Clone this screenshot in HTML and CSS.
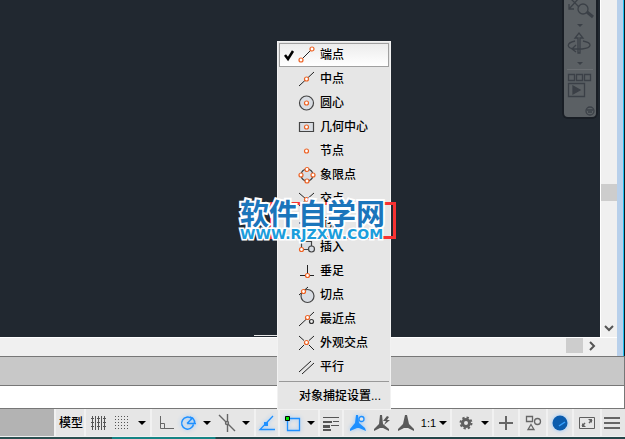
FILE: index.html
```html
<!DOCTYPE html>
<html lang="zh-CN">
<head>
<meta charset="utf-8">
<title>对象捕捉</title>
<link rel="stylesheet" href="styles.css">
</head>
<body>
<div class="workspace">
  <div class="view">
    <main class="canvas">
      <div class="navbar">
        <svg width="32" height="118" viewBox="0 0 32 118" fill="none" stroke="#3b4047" stroke-width="1.3">
          <path d="M7 -1l8 8M16 -3L5 9M5 4v5h5"/><circle cx="19" cy="9" r="5"/><path d="M23 12l6 5" stroke-width="3"/>
          <path d="M13 24h6l-3 3z" fill="#3b4047" stroke="none"/>
          <path d="M14 53V38h-3l4-5 4 5h-3v15z"/><path d="M11 41c-9 2-9 7 0 8M19 41c10 2 9 7-1 8h-9M12 45l-4 4 4 3"/>
          <path d="M13 62h6l-3 3z" fill="#3b4047" stroke="none"/>
          <path d="M3 69.500h26" stroke="#6b6f73" stroke-width="1"/>
          <path d="M4.500 74.500h6v6h-6zM12.500 74.500h6v6h-6zM20.500 74.500h6v6h-6zM4.500 83.500h16v13h-16z"/>
          <path d="M9 86l7 4-7 4z" fill="#3b4047"/>
          <circle cx="26" cy="111" r="4"/><path d="M23 110h6M24 112h4"/>
        </svg>
      </div>
      <span class="tab-edge"></span>
    </main>
    <div class="vscroll">
      <span class="vthumb"></span>
      <svg class="chevron" width="16" height="18" viewBox="0 0 16 18"><path d="M4 7l4 4 4-4"/></svg>
    </div>
    <div class="hscroll">
      <span class="hthumb"></span>
      <svg class="chevron" width="18" height="17" viewBox="0 0 18 17"><path d="M7 4l4 4-4 4"/></svg>
    </div>
  </div>
  <div class="window-edge"></div>
</div>
<div class="history"></div>
<input class="command" type="text" aria-label="命令行">
<footer class="status">
  <div class="group model"><button>模型</button></div>
  <div class="group">
    <button class="tool" aria-label="栅格"><svg width="16" height="16" viewBox="0 0 16 16" stroke="#555"><path d="M2.500 1v14M5.500 1v14M8.500 1v14M11.500 1v14M14.500 1v14"/><path d="M1 3.500h15M1 7.500h15M1 11.500h15" stroke-dasharray="1 1"/></svg></button>
    <button class="tool" aria-label="捕捉"><svg width="16" height="16" viewBox="0 0 16 16" stroke="#555" stroke-dasharray="1 2"><path d="M1 1.500h15M1 4.500h15M1 7.500h15M1 10.500h15M1 13.500h15"/></svg></button>
    <button class="drop" aria-label="捕捉选项"></button>
  </div>
  <div class="group lead">
    <button class="tool" aria-label="正交"><svg width="16" height="16" viewBox="0 0 16 16" fill="none" stroke="#666"><path d="M2.500 1v12.500H16M2.500 8.500h4v5"/></svg></button>
    <button class="tool polar" aria-label="极轴"><svg class="lit" width="18" height="18" viewBox="0 0 18 18" fill="none" stroke="#1e90ff" stroke-width="1.500"><path d="M12.500 4.500a6 6 0 1 0 2 6M8 9.500h9M8 9.500l6-6M11 3l3 1.500q2 2 1.500 5"/></svg></button>
    <button class="drop wide" aria-label="极轴选项"></button>
    <button class="tool slim" aria-label="等轴测"><svg width="18" height="18" viewBox="0 0 18 18" fill="none" stroke="#666" stroke-width="1.400"><path d="M1 1l16 16M9.500 0v18"/><circle cx="9" cy="9" r="1.500" fill="#e6e6e6"/></svg></button>
    <button class="drop" aria-label="等轴测选项"></button>
  </div>
  <div class="group">
    <button class="tool slim" aria-label="对象捕捉追踪"><svg class="lit" width="18" height="18" viewBox="0 0 18 18" fill="none" stroke="#1e90ff" stroke-width="1.300"><path d="M15 2L2 15.500h15"/><path d="M6 8h4v4H6z" fill="#1e90ff" stroke="none"/></svg></button>
  </div>
  <div class="group">
    <button class="tool" aria-label="对象捕捉"><svg class="lit" width="18" height="18" viewBox="0 0 18 18" fill="none"><path d="M4.500 4.500h12v12h-12z" stroke="#1e90ff" stroke-width="1.300"/><path d="M2.500 2.500h4v4h-4z" fill="#00e600" stroke="#000"/></svg></button>
    <button class="drop narrow" aria-label="对象捕捉选项"></button>
  </div>
  <div class="group">
    <button class="tool slim" aria-label="线宽"><svg width="18" height="18" viewBox="0 0 18 18" fill="#555"><path d="M1 3h16v1H1zM1 7h9v2H1zM11 7h6v1h-6zM1 11h7v3H1zM9 11h8v1H9zM1 15h8v2H1z"/></svg></button>
  </div>
  <div class="group lead">
    <button class="tool" aria-label="注释可见性"><svg class="lit" width="18" height="18" viewBox="0 0 18 18" fill="#1e90ff"><path d="M7 1l2 0 1 8 6 5 1 3-7-3H8l-7 3v-2l5-6z"/><circle cx="12.500" cy="5" r="2.500" fill="#e6e6e6" stroke="#1e90ff" stroke-width="1.300"/></svg></button>
    <button class="tool" aria-label="自动缩放"><svg width="18" height="18" viewBox="0 0 18 18" fill="#595959"><path d="M7 1h2l1 9 6 5v2l-6-3H7l-6 3v-2l5-5zM14 2l-4 5h3l-2 4 6-5h-3l2-3z"/></svg></button>
    <button class="tool" aria-label="注释比例"><svg width="18" height="18" viewBox="0 0 18 18" fill="#595959"><path d="M8 1h2l2 9 5 5v2l-6-3H7l-6 3v-2l5-5z"/></svg></button>
    <button class="scale">1:1<i class="caret"></i></button>
  </div>
  <div class="group lead">
    <button class="tool" aria-label="工作空间"><svg width="16" height="16" viewBox="0 0 16 16" fill="none" stroke="#606060"><circle cx="8" cy="8" r="3.500" stroke-width="3"/><circle cx="8" cy="8" r="5.500" stroke-width="2" stroke-dasharray="2.300 2"/></svg></button>
    <button class="drop narrow" aria-label="工作空间选项"></button>
  </div>
  <div class="group">
    <button class="tool" aria-label="注释监视器"><svg width="16" height="16" viewBox="0 0 16 16" stroke="#666" stroke-width="2"><path d="M8 1v14M1 8h14"/></svg></button>
  </div>
  <div class="group">
    <button class="tool broad" aria-label="隔离对象"><svg width="18" height="18" viewBox="0 0 18 18" fill="none" stroke="#666" stroke-width="1.300"><path d="M2.500 2.500h6v5h-6zM7 10.500l3 5H4z"/><circle cx="13.500" cy="7.500" r="3"/></svg></button>
  </div>
  <div class="group">
    <button class="tool" aria-label="硬件加速"><svg class="lit" width="18" height="18" viewBox="0 0 18 18"><circle cx="9" cy="9" r="7.500" fill="#0b5cad"/><path d="M8 12l6-4" stroke="#36a1ff" stroke-width="1.500"/></svg></button>
  </div>
  <div class="group">
    <button class="tool broad" aria-label="全屏显示"><svg width="18" height="16" viewBox="0 0 18 16" fill="none" stroke="#606060"><path d="M1.500 2.500h15v11h-15z"/><path d="M4 11l3-3M14 5l-3 3" stroke-width="1.500"/><path d="M4 8v4h4zM10 4h4v4z" fill="#606060" stroke="none"/></svg></button>
  </div>
  <div class="group last">
    <button class="tool" aria-label="自定义"><svg width="16" height="16" viewBox="0 0 16 16" fill="#666"><path d="M0 2h16v2H0zM0 7h16v2H0zM0 12h16v2H0z"/></svg></button>
  </div>
</footer>
<div class="taskbar"></div>

<div class="menu" role="menu">
  <button class="item active" role="menuitem"><svg width="40" height="20" viewBox="0 0 40 20"><path class="check" d="M5 10l3 4 5-8"/><path class="ink" d="M22 14l9-9"/><circle class="dot" cx="21" cy="15" r="2"/><circle class="dot" cx="32" cy="4" r="2"/></svg>端点</button>
  <button class="item" role="menuitem"><svg width="40" height="20" viewBox="0 0 40 20"><path class="ink" d="M19 17L34 3"/><circle class="dot" cx="26.500" cy="10" r="2"/></svg>中点</button>
  <button class="item" role="menuitem"><svg width="40" height="20" viewBox="0 0 40 20"><circle class="shape" cx="26.500" cy="10" r="7"/><circle class="dot" cx="26.500" cy="10" r="2"/></svg>圆心</button>
  <button class="item" role="menuitem"><svg width="40" height="20" viewBox="0 0 40 20"><path class="shape" d="M19.500 5.500h14v9h-14z"/><circle class="dot" cx="26.500" cy="10" r="2"/></svg>几何中心</button>
  <button class="item" role="menuitem"><svg width="40" height="20" viewBox="0 0 40 20"><circle class="dot" cx="26.500" cy="10" r="2"/></svg>节点</button>
  <button class="item" role="menuitem"><svg width="40" height="20" viewBox="0 0 40 20"><circle class="shape" cx="27" cy="10" r="6"/><circle class="dot" cx="27" cy="4.500" r="2"/><circle class="dot" cx="21" cy="10" r="2"/><circle class="dot" cx="33" cy="10" r="2"/><circle class="dot" cx="27" cy="16" r="2"/></svg>象限点</button>
  <button class="item" role="menuitem"><svg width="40" height="20" viewBox="0 0 40 20"><path class="ink" d="M19 4l15 13M34 4L19 17"/><circle class="dot" cx="26.500" cy="10.500" r="2"/></svg>交点</button>
  <button class="item" role="menuitem"><svg width="40" height="20" viewBox="0 0 40 20"><path class="ink" d="M19 10h8" /><path class="ink" stroke-dasharray="1 2" d="M27 10h8"/><circle class="dot" cx="26.500" cy="10" r="2"/></svg>范围</button>
  <button class="item" role="menuitem"><svg width="40" height="20" viewBox="0 0 40 20"><path class="shape" d="M21.500 12V4.500h10v8H22"/><circle class="shape" cx="31.500" cy="12" r="3"/><circle class="dot" cx="21.500" cy="12.500" r="2"/></svg>插入</button>
  <button class="item" role="menuitem"><svg width="40" height="20" viewBox="0 0 40 20"><path class="ink" d="M27.500 4v10M20 14.500h14"/><circle class="dot" cx="27.500" cy="14.500" r="2"/></svg>垂足</button>
  <button class="item" role="menuitem"><svg width="40" height="20" viewBox="0 0 40 20"><circle class="shape" cx="27.500" cy="11" r="6.500"/><path class="ink" d="M19 10l9-8"/><circle class="dot" cx="23.500" cy="6.500" r="2"/></svg>切点</button>
  <button class="item" role="menuitem"><svg width="40" height="20" viewBox="0 0 40 20"><path class="ink" d="M19 17L34 3"/><circle class="dot" cx="27.500" cy="8.500" r="2"/><circle class="ring" cx="31.500" cy="12.500" r="2"/></svg>最近点</button>
  <button class="item" role="menuitem"><svg width="40" height="20" viewBox="0 0 40 20"><path class="ink" d="M19 3l5 4.500M29 12l5 5M34 3l-5 4.500M24 12l-5 5"/><circle class="dot" cx="26.500" cy="9.500" r="2"/></svg>外观交点</button>
  <button class="item" role="menuitem"><svg width="40" height="20" viewBox="0 0 40 20"><path class="ink" d="M19 15L31 4M22 17L34 6"/></svg>平行</button>
  <hr>
  <button class="item settings" role="menuitem">对象捕捉设置...</button>
</div>
<div class="highlight"></div>
<div class="watermark"><span class="site">软件自学网</span><span class="url">WWW.RJZXW.COM</span></div>
</body>
</html>
```
FILE: styles.css
```css
* { box-sizing: border-box; }
body {
  margin: 0;
  height: 100vh;
  position: relative;
  display: flex;
  flex-direction: column;
  overflow: hidden;
  background: #f0f0f0;
  color: #000;
  font: 500 12px/16px "Liberation Sans", "Noto Sans CJK SC", sans-serif;
}
button {
  margin: 0;
  padding: 0;
  border: 0;
  background: none;
  color: inherit;
  font: inherit;
}
svg { display: block; flex: none; }

.workspace { flex: 1; display: flex; min-height: 0; }
.view {
  flex: 1;
  display: grid;
  grid-template-columns: 1fr 17px;
  grid-template-rows: 1fr 19px;
}
.canvas {
  position: relative;
  background: #212830;
  overflow: hidden;
}
.navbar {
  position: absolute;
  top: -4px;
  right: 4px;
  width: 32px;
  height: 121px;
  padding-top: 4px;
  background: #5b6064;
  border-radius: 4px;
  box-shadow: 0 0 0 2px #191e25;
}
.tab-edge {
  position: absolute;
  left: 254px;
  bottom: 1px;
  width: 24px;
  height: 1px;
  background: #e8e8e8;
}
.vscroll {
  border-left: 1px solid #fff;
  display: flex;
  flex-direction: column;
  justify-content: flex-end;
}
.vthumb { height: 17px; margin-bottom: 118px; background: #cdcdcd; }
.hscroll {
  grid-column: 1 / -1;
  border-top: 1px solid #fff;
  display: flex;
  justify-content: flex-end;
  padding-right: 16px;
}
.hthumb { width: 17px; height: 15px; background: #cdcdcd; }
.chevron { fill: none; stroke: #555; stroke-width: 2; }
.window-edge {
  width: 8px;
  background: #b8d0eb;
  border-right: 1px solid #101820;
  box-shadow: inset -1px 0 #20c0f0;
}
.history {
  height: 30px;
  background: #c8c8c8;
  border: 1px solid #777;
  border-left: 0;
}
.command {
  width: 100%;
  height: 23px;
  margin: 0;
  padding: 0 4px;
  background: #fff;
  border: 1px solid #777;
  border-width: 0 1px 1px 0;
  border-radius: 0;
  outline: 0;
}
.status {
  height: 28px;
  display: flex;
  padding-left: 54px;
  background: linear-gradient(to right, #b3b3b3 54px, #e6e6e6 54px);
  border-bottom: 1px solid #f0f0f0;
}
.group { display: flex; align-items: stretch; border-right: 2px solid #f1f1f1; }
.lead { padding-left: 2px; }
.model { width: 32px; padding-left: 2px; border-left: 2px solid #f1f1f1; justify-content: center; }
.last { flex: 1; border-right: 0; }
.tool { width: 24px; display: flex; align-items: center; justify-content: center; }
.slim { width: 22px; }
.polar { width: 20px; }
.broad { width: 26px; }
.last .tool { width: 20px; }
.drop { width: 16px; display: flex; align-items: center; justify-content: center; }
.wide { width: 18px; }
.narrow { width: 14px; }
.drop::before, .caret {
  content: "";
  border: 4px solid transparent;
  border-top-color: #000;
  border-bottom: 0;
}
.scale { width: 32px; display: flex; align-items: center; justify-content: center; gap: 3px; font-size: 11px; }
.lit { filter: drop-shadow(0 0 2px #8cc4ff); }
.taskbar { height: 2px; background: linear-gradient(to right, #2b4f50 112px, #168585 112px, #168585 215px, #244548 216px); }

.menu {
  position: absolute;
  left: 277px;
  bottom: 29px;
  width: 114px;
  padding: 1px;
  background: #e6e6e6;
  border: 1px solid #f2f2f2;
}
.item {
  width: 100%;
  height: 24px;
  display: flex;
  align-items: center;
  border: 1px solid transparent;
  white-space: nowrap;
}
.item.active { border-color: #a0a0a0; background: linear-gradient(#ececec, #fff); }
.settings { padding-left: 19px; }
.menu hr { margin: 2px 0; border: 0; border-top: 1px solid #999; }
.check { fill: none; stroke: #000; stroke-width: 2.500; }
.ink { fill: none; stroke: #222; stroke-width: 1; }
.shape { fill: #d9dde3; stroke: #444; stroke-width: 1.200; }
.dot { fill: #fff; stroke: #ed6325; stroke-width: 1.200; }
.ring { fill: #eee; stroke: #333; stroke-width: 1.200; }

.highlight {
  position: absolute;
  left: 270px;
  top: 202px;
  width: 126px;
  height: 37px;
  border: 3px solid #f83232;
}
.watermark {
  position: absolute;
  left: 240px;
  top: 196px;
  display: flex;
  flex-direction: column;
  white-space: nowrap;
  -webkit-text-stroke: 4px #fff;
  paint-order: stroke fill;
}
.site {
  font: 700 29px/32px "Noto Sans CJK SC", sans-serif;
  color: #1b75bb;
}
.url {
  font: 700 14px/12px "DejaVu Sans", sans-serif;
  color: #1b9ddc;
  -webkit-text-stroke-width: 3px;
}
```
